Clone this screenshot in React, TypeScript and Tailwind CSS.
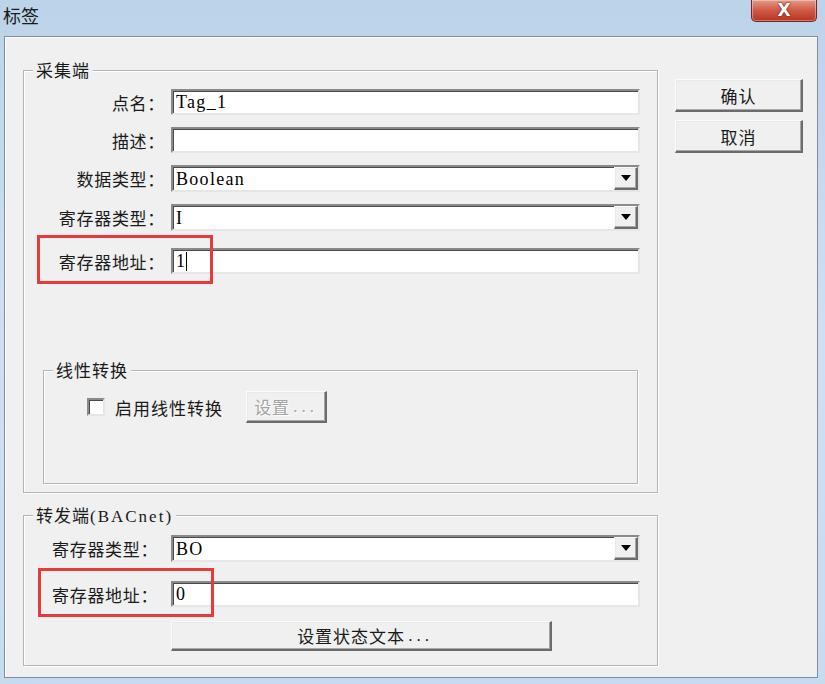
import type { ReactNode } from 'react'

const cjk = "font-['Noto_Sans_CJK_SC','Noto_Sans_CJK_JP',sans-serif]"
const latin = "font-['Liberation_Serif','DejaVu_Serif',serif]"

// sunken 3D edit box, Win classic style
const sunken =
  'border-t-2 border-l-2 border-b-2 border-r-2 border-t-[#8a8a8a] border-l-[#8a8a8a] border-b-[#e6e6e6] border-r-[#e6e6e6] shadow-[inset_1px_1px_0_#4a4a4a] bg-white'

const raised =
  'border-t border-l border-b-2 border-r-2 border-t-[#fcfcfc] border-l-[#fcfcfc] border-b-[#6b6b6b] border-r-[#6b6b6b] shadow-[inset_-1px_-1px_0_#a8a8a8,inset_1px_1px_0_#e9e9e9] bg-[#f0f0f0]'

function Edit({ value, cursor }: { value?: string; cursor?: boolean }) {
  return (
    <div className={`flex h-[26px] w-[469px] items-center pl-[3px] ${sunken}`}>
      <span className={`${latin} text-[18px] leading-none tracking-[1.3px] text-black`}>{value}</span>
      {cursor && <span className="h-[19px] w-[1px] bg-black" />}
    </div>
  )
}

function Combo({ value }: { value: string }) {
  return (
    <div className={`flex h-[27px] w-[469px] items-stretch pl-[3px] ${sunken}`}>
      <span className={`${latin} flex flex-1 items-center text-[18px] leading-none tracking-[1.3px] text-black`}>{value}</span>
      <div className={`flex w-[24px] items-center justify-center ${raised}`}>
        <svg width="10" height="6" viewBox="0 0 10 6">
          <path d="M0 0h10L5 6z" fill="#000" />
        </svg>
      </div>
    </div>
  )
}

function Group({ label, className, children }: { label: ReactNode; className: string; children: ReactNode }) {
  return (
    <div className={`relative border border-[#b4b4b4] shadow-[inset_1px_1px_0_#fff,1px_1px_0_#fff] ${className}`}>
      <span
        className={`absolute -top-[11px] left-[9px] whitespace-nowrap bg-[#f0f0f0] px-[3px] text-[17px] leading-[20px] tracking-[1px] text-[#1a1a1a] ${cjk}`}
      >
        {label}
      </span>
      {children}
    </div>
  )
}

function Row({ label, children, red, align = 'right' }: { label: string; children: ReactNode; red?: string; align?: 'right' | 'left' }) {
  return (
    <div className="relative flex items-center">
      <span
        className={`${cjk} shrink-0 whitespace-nowrap text-[17px] leading-none tracking-[0.7px] text-[#1a1a1a] ${
          align === 'right' ? 'w-[147px] pr-[6px] text-right' : 'w-[147px] pl-[28px]'
        }`}
      >
        {label}
      </span>
      {children}
      {red && <div className={`pointer-events-none absolute -top-[13px] h-[49px] w-[176px] border-[3px] border-[#e8393b] ${red}`} />}
    </div>
  )
}

// SimSun-style wide ellipsis dots
const Dots = () => <span className={`${latin} ml-[3px] tracking-[4px]`}>...</span>

function Button({ children, className, disabled }: { children: ReactNode; className: string; disabled?: boolean }) {
  return (
    <div
      className={`flex items-center justify-center ${raised} ${cjk} text-[17px] leading-none tracking-[1px] ${
        disabled ? 'text-[#a3a3a3] [text-shadow:1px_1px_0_#fff]' : 'text-[#1a1a1a]'
      } ${className}`}
    >
      {children}
    </div>
  )
}

export default function App() {
  return (
    <div className="h-[684px] w-[825px] overflow-hidden bg-gradient-to-b from-[#bcd3ea] via-[#cfe0f2] to-[#c7dbef]">
      {/* title bar */}
      <div className="flex h-[36px] items-start justify-between">
        <span className={`${cjk} ml-[3px] mt-[5px] text-[18px] leading-[20px] text-[#1b1b1b]`}>标签</span>
        <div className="mr-[8px] flex h-[22px] w-[66px] items-center justify-center rounded-b-[5px] border border-t-0 border-[#6b2b22] bg-gradient-to-b from-[#e4998a] via-[#cf5843] to-[#b8321f] shadow-[inset_0_0_0_1px_rgba(255,255,255,0.35)]">
          <span className="font-['DejaVu_Sans',sans-serif] text-[17px] font-bold leading-none text-white [text-shadow:0_0_2px_#5a1c12,0_0_1px_#5a1c12]">
            X
          </span>
        </div>
      </div>

      {/* client area */}
      <div className="ml-[4px] flex h-[642px] w-[814px] border border-[#7f8d9c] bg-[#f0f0f0] pl-[18px] pt-[33px] shadow-[inset_1px_1px_0_#fff]">
        <div className="flex w-[635px] flex-col gap-[22px]">
          <Group label="采集端" className="h-[423px] pt-[18px]">
            <div className="flex flex-col gap-[12px]">
              <Row label="点名：">
                <Edit value="Tag_1" />
              </Row>
              <Row label="描述：">
                <Edit />
              </Row>
              <Row label="数据类型：">
                <Combo value="Boolean" />
              </Row>
              <Row label="寄存器类型：">
                <Combo value="I" />
              </Row>
              <div className="mt-[5px]">
                <Row label="寄存器地址：" red="left-[13px]">
                  <Edit value="1" cursor />
                </Row>
              </div>
            </div>

            <Group label="线性转换" className="ml-[19px] mt-[96px] h-[114px] w-[595px] pt-[20px]">
              <div className="flex items-center">
                <div className={`ml-[43px] h-[18px] w-[18px] ${sunken}`} />
                <span className={`${cjk} ml-[10px] text-[17px] leading-none tracking-[1px] text-[#1a1a1a]`}>启用线性转换</span>
                <Button disabled className="ml-[23px] h-[32px] w-[81px]">
                  设置
                  <Dots />
                </Button>
              </div>
            </Group>
          </Group>

          <Group
            label={
              <>
                转发端<span className={`${latin} tracking-[2px]`}>(BACnet)</span>
              </>
            }
            className="h-[151px] pt-[19px]"
          >
            <div className="flex flex-col">
              <Row label="寄存器类型：" align="left">
                <Combo value="BO" />
              </Row>
              <div className="mt-[19px]">
                <Row label="寄存器地址：" align="left" red="left-[14px]">
                  <Edit value="0" />
                </Row>
              </div>
              <Button className="ml-[147px] mt-[14px] h-[30px] w-[381px] pl-[8px]">
                设置状态文本
                <Dots />
              </Button>
            </div>
          </Group>
        </div>

        <div className="ml-[17px] mt-[9px] flex flex-col gap-[8px]">
          <Button className="h-[33px] w-[128px]">确认</Button>
          <Button className="h-[33px] w-[128px]">取消</Button>
        </div>
      </div>
    </div>
  )
}
